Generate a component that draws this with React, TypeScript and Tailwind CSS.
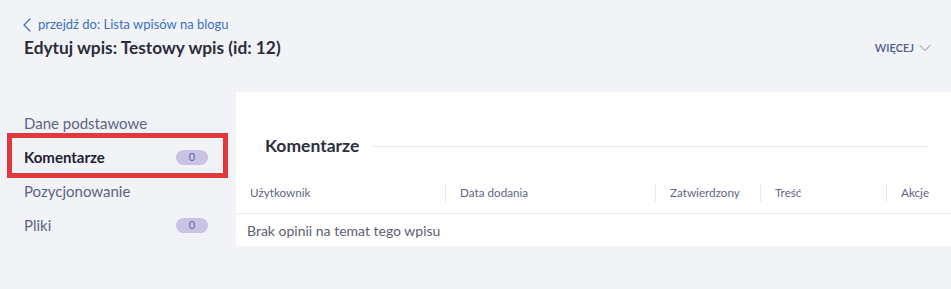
import React from "react";
import { ChevronLeft, ChevronDown } from "lucide-react";

const tabs = [
  { label: "Dane podstawowe" },
  { label: "Komentarze", count: 0, active: true },
  { label: "Pozycjonowanie" },
  { label: "Pliki", count: 0 },
];

const columns = [
  { label: "Użytkownik", first: true },
  { label: "Data dodania" },
  { label: "Zatwierdzony" },
  { label: "Treść" },
  { label: "Akcje" },
];

export default function App() {
  return (
    <div
      className="min-h-[289px] bg-[#f2f3f7] pb-[42px]"
      style={{ fontFamily: "Lato, 'Open Sans', sans-serif" }}
    >
      <div className="pl-[24px] pr-[20px] pt-[17px]">
        <a className="flex h-[16px] items-center text-[13px] text-[#3c6fc4]">
          <ChevronLeft size={24} strokeWidth={1.2} className="-ml-[9px] -mr-[1px]" />
          przejdź do: Lista wpisów na blogu
        </a>
        <div className="mt-[4px] flex h-[22px] items-center justify-between">
          <h1 className="text-[17.3px] font-bold text-[#2b2d3b]">
            Edytuj wpis: Testowy wpis (id: 12)
          </h1>
          <button className="flex items-center gap-[1px] text-[11px] font-semibold uppercase text-[#4b5b8c]">
            Więcej
            <ChevronDown size={20} strokeWidth={1.1} className="-mr-[4px] text-[#7a809a]" />
          </button>
        </div>
      </div>

      <div className="mt-[33px] flex">
        <nav className="w-[236px] shrink-0 pt-[14px]">
          {tabs.map((t) => (
            <div
              key={t.label}
              className="relative flex h-[34px] items-center justify-between pl-[24px] pr-[28px]"
            >
              <span
                className={
                  t.active
                    ? "text-[15px] font-bold text-[#1f2230]"
                    : "text-[15px] text-[#5d6482]"
                }
              >
                {t.label}
              </span>
              {t.count !== undefined && (
                <span className="flex h-[15px] w-[32px] items-center justify-center rounded-full bg-[#c9c2e4] text-[11px] text-[#5a6a9c]">
                  {t.count}
                </span>
              )}
              {t.active && (
                <div className="absolute left-[7px] right-[8px] top-[-7px] h-[45px] border-[5px] border-[#e2393f]" />
              )}
            </div>
          ))}
        </nav>

        <section className="flex-1 bg-white">
          <div className="flex items-center gap-[14px] pl-[29px] pr-[23px] pt-[42px]">
            <h2 className="h-[24px] text-[17.5px] font-bold leading-[24px] text-[#2d2f3d]">
              Komentarze
            </h2>
            <div className="h-px flex-1 bg-[#e6e7ec]" />
          </div>
          <div className="mt-[14px] grid h-[42px] grid-cols-[209px_210px_105px_126px_1fr] items-center border-b border-[#e8e9ee]">
            {columns.map((c) => (
              <div
                key={c.label}
                className={
                  c.first
                    ? "flex h-[18px] items-center pl-[14px] text-[11.7px] text-[#626683]"
                    : "flex h-[18px] items-center border-l border-[#e8e9ee] pl-[14px] text-[11.7px] text-[#626683]"
                }
              >
                {c.label}
              </div>
            ))}
          </div>
          <div className="flex h-[32px] items-center pl-[11px] text-[14px] text-[#5b5e70]">
            Brak opinii na temat tego wpisu
          </div>
        </section>
      </div>
    </div>
  );
}
